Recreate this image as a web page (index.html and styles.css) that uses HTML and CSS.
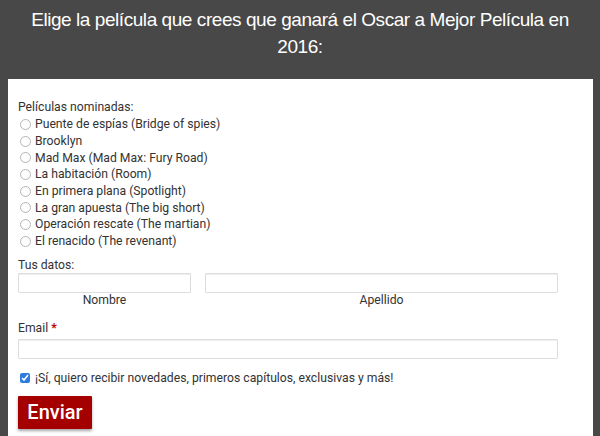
FILE: index.html
```html
<!DOCTYPE html>
<html lang="es">
<head>
  <meta charset="UTF-8" />
  <meta name="viewport" content="width=device-width, initial-scale=1.0"/>
  <title>Oscar 2016</title>
  <link rel="stylesheet" href="styles.css">
</head>
<body>

  <header>
    <h2>Elige la película que crees que ganará el Oscar a Mejor Película en<br>2016:</h2>
  </header>

  <form class="panel">
    <p class="label">Películas nominadas:</p>
    <label class="opt"><input type="radio" name="peli"> Puente de espías (Bridge of spies)</label>
    <label class="opt"><input type="radio" name="peli"> Brooklyn</label>
    <label class="opt"><input type="radio" name="peli"> Mad Max (Mad Max: Fury Road)</label>
    <label class="opt"><input type="radio" name="peli"> La habitación (Room)</label>
    <label class="opt"><input type="radio" name="peli"> En primera plana (Spotlight)</label>
    <label class="opt"><input type="radio" name="peli"> La gran apuesta (The big short)</label>
    <label class="opt"><input type="radio" name="peli"> Operación rescate (The martian)</label>
    <label class="opt"><input type="radio" name="peli"> El renacido (The revenant)</label>

    <p class="label datos">Tus datos:</p>
    <div class="names">
      <div class="field first">
        <input type="text">
        <span>Nombre</span>
      </div>
      <div class="field last">
        <input type="text">
        <span>Apellido</span>
      </div>
    </div>

    <p class="label email">Email <b>*</b></p>
    <input type="email" class="wide">

    <label class="check"><input type="checkbox" checked> ¡Sí, quiero recibir novedades, primeros capítulos, exclusivas y más!</label>

    <button type="button">Enviar</button>
  </form>

</body>
</html>
```

FILE: styles.css
```css
* { box-sizing: border-box; }
body {
  margin: 0;
  background: #484848;
  font-family: Roboto, 'Liberation Sans', sans-serif;
  font-size: 12.2px;
  color: #333;
  overflow: hidden;
}
header {
  padding: 6px 0 5px;
  text-align: center;
}
header h2 {
  margin: 0;
  color: #fff;
  font-family: 'Liberation Sans', Arial, sans-serif;
  font-size: 19px;
  letter-spacing: -0.44px;
  font-weight: normal;
  line-height: 27px;
  white-space: nowrap;
}
.panel {
  margin: 14px 7px 0 8px;
  background: #fff;
  padding: 20px 10px 40px;
  min-height: 400px;
}
.label {
  margin: 0;
  line-height: 17px;
}
.opt {
  display: flex;
  align-items: center;
  height: 16.7px;
}
.opt input {
  appearance: none;
  margin: 0 4px 0 2px;
  width: 11px;
  height: 11px;
  border: 1px solid #b5b5b5;
  border-radius: 50%;
  background: #fff;
}
.datos { margin-top: 7px; line-height: 16px; }
.names {
  display: flex;
  gap: 14px;
  width: 540px;
}
.field {
  display: flex;
  flex-direction: column;
  align-items: center;
}
.field.first { width: 173px; }
.field.last { flex: 1; }
.field span {
  line-height: 15px;
}
input[type=text], input[type=email] {
  width: 100%;
  height: 20px;
  margin: 0;
  border: 1px solid #ddd;
  border-radius: 1px;
  box-shadow: inset 0 1px 1px #eee;
  font-size: 12px;
}
.email { margin-top: 12px; line-height: 16px; }
.email b { color: #b00; }
.wide {
  display: block;
  width: 540px !important;
  margin-top: 3px !important;
}
.check {
  display: flex;
  align-items: center;
  margin-top: 10px;
  height: 18px;
}
.check input {
  margin: 0 5px 0 2px;
  width: 10px;
  height: 10px;
  accent-color: #2e7be0;
}
button {
  margin-top: 9px;
  background: #a50000;
  color: #fff;
  border: none;
  border-radius: 1px;
  width: 74px;
  height: 33px;
  font-family: Roboto, 'Liberation Sans', sans-serif;
  font-size: 20px;
  font-weight: 500;
  box-shadow: 0 2px 3px rgba(0,0,0,0.35);
  cursor: pointer;
}
```
